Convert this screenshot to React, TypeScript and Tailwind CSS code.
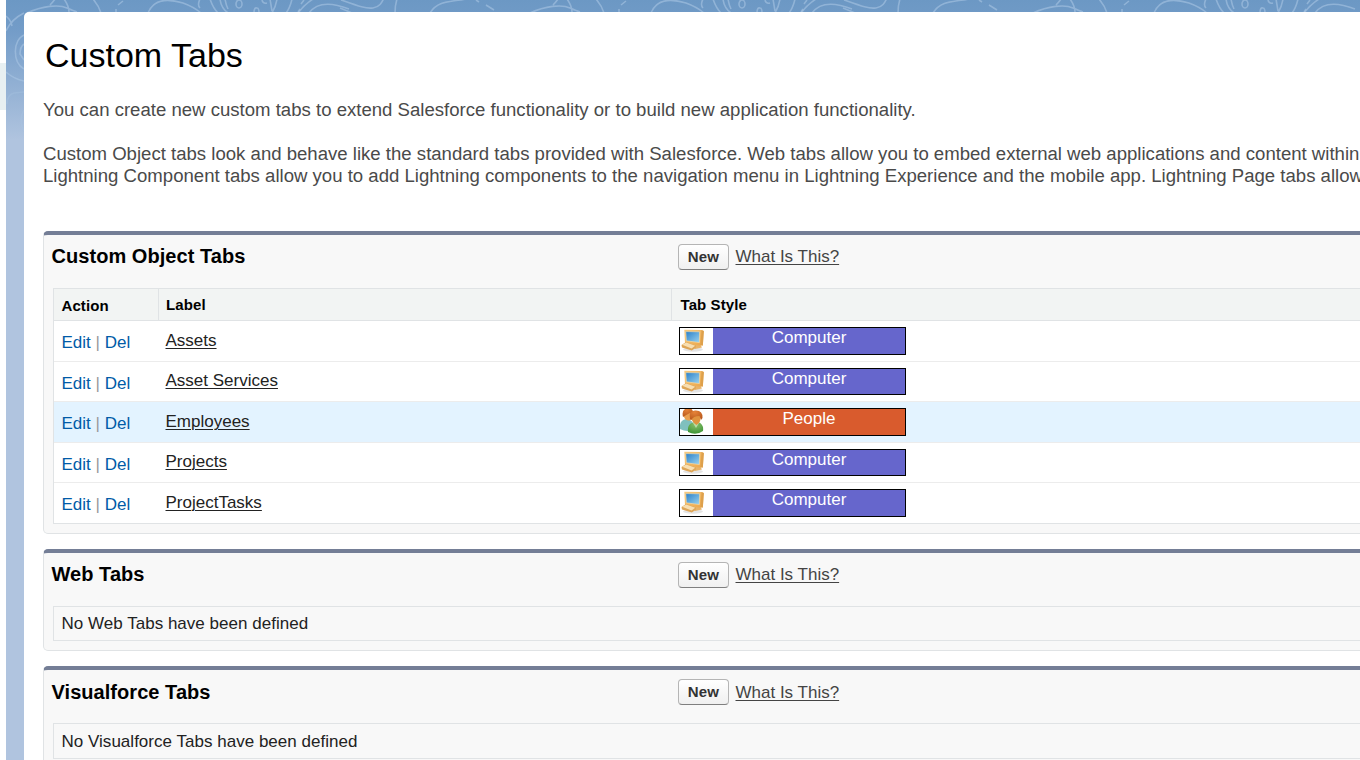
import React from "react";

type TabStyle = "Computer" | "People";

const rows: { label: string; style: TabStyle; height: string; badge: string; labelPad: string; highlight?: boolean }[] = [
  { label: "Assets", style: "Computer", height: "h-[41px]", badge: "h-[28px]", labelPad: "pt-[10px]" },
  { label: "Asset Services", style: "Computer", height: "h-[40px]", badge: "h-[27px]", labelPad: "pt-[9px]" },
  { label: "Employees", style: "People", height: "h-[41px]", badge: "h-[28px]", labelPad: "pt-[10px]", highlight: true },
  { label: "Projects", style: "Computer", height: "h-[40px]", badge: "h-[27px]", labelPad: "pt-[9px]" },
  { label: "ProjectTasks", style: "Computer", height: "h-[40px]", badge: "h-[28px]", labelPad: "pt-[10px]" },
];

function Doodles() {
  return (
    <svg className="absolute top-0 left-0" width="1360" height="140" fill="none" stroke="#a9c5e2" strokeOpacity="0.6" strokeWidth="1.6">
      <defs>
        <g id="strip">
          <path d="M0 8 Q5 10 12 13" />
          <path d="M1 0 C18 6 26 9 33 8 C40 7 42 2 44 -2" />
          <path d="M55 13 Q55 5 57 -1" />
          <path d="M90 13 C98 0 112 2 126 -1" />
          <path d="M146 5 L154 10 M136 0 L139 2" />
          <path d="M190 13 C205 6 222 4 230 8 Q237 11 240 12 M213 5 Q216 2 218 -1 M227 -1 Q232 6 232 12" />
          <path d="M256 -1 Q262 6 264 13 M279 13 L279 9 M281 5 L286 1" />
          <path d="M311 13 C317 -2 333 -1 346 3 Q357 7 364 13" />
          <path d="M363 -1 Q360 5 363 8 M373 -1 Q376 8 381 13 M383 -1 Q384 8 391 13 M388 -1 Q389 5 391 9" />
          <ellipse cx="402" cy="4" rx="3" ry="4" />
          <path d="M417 13 Q417 7 420 8 Q422 8 422 13 M425 0 Q426 4 430 3 M433 -1 L435 11 M440 -1 Q439 6 435 13" />
          <path d="M455 -1 Q453 8 449 13 M461 12 L463 9 M464 4 L467 0" />
          <path d="M461 13 Q468 4 476 -1 M472 13 C480 2 494 2 512 9" />
        </g>
      </defs>
      <use href="#strip" x="-163" />
      <use href="#strip" x="340" />
      <use href="#strip" x="843" />
      <path d="M6 16 Q11 20 12 26 M6 31 C10 22 16 17 24 13 M6 72 Q14 79 24 81" />
      <path d="M24 35 C13 40 12 62 24 69 M24 44 Q20 47 20 54 L24 60" />
      <path d="M7 104 Q7 95 14 93 L24 92 M24 110 Q18 120 24 131" strokeOpacity="0.35" />
    </svg>
  );
}

function ComputerIcon() {
  return (
    <svg width="28" height="26" viewBox="0 0 28 26">
      <defs>
        <linearGradient id="screen" x1="0" y1="0" x2="1" y2="1">
          <stop offset="0" stopColor="#2a7fc8" />
          <stop offset="1" stopColor="#9bd4f0" />
        </linearGradient>
        <linearGradient id="caseFill" x1="0" y1="0" x2="1" y2="1">
          <stop offset="0" stopColor="#f8cb80" />
          <stop offset="1" stopColor="#eba548" />
        </linearGradient>
      </defs>
      <ellipse cx="13" cy="21.5" rx="10" ry="2.2" fill="#c9c9c9" opacity="0.5" />
      <path d="M11 15 L20 16 L22 19.5 L15 21Z" fill="#e9b368" />
      <path d="M4.3 1.8 L21.5 2 L23.8 3 L22.8 17.4 L19 17.6 L5 15Z" fill="url(#caseFill)" />
      <path d="M21.5 2 L23.8 3 L22.8 17.4 L20.5 17Z" fill="#dda04c" />
      <path d="M5.8 3.6 L19.6 3.8 L19.4 14.6 L6.4 12.8Z" fill="url(#screen)" stroke="#f9dfac" strokeWidth="0.6" />
      <path d="M1.5 17 L6 14 L16 17.5 L15.5 20 L11.8 22.6 L2 19.5Z" fill="#dea557" />
      <path d="M2.2 16.8 L6.2 14.6 L15.2 17.8 L11.6 20.6Z" fill="#f8dfb2" />
    </svg>
  );
}

function PeopleIcon() {
  return (
    <svg width="28" height="26" viewBox="0 0 28 26">
      <defs>
        <radialGradient id="hair" cx="0.4" cy="0.2" r="0.8">
          <stop offset="0" stopColor="#e58338" />
          <stop offset="1" stopColor="#b9581c" />
        </radialGradient>
        <radialGradient id="green" cx="0.5" cy="0.2" r="0.8">
          <stop offset="0" stopColor="#8bc06b" />
          <stop offset="1" stopColor="#3f9638" />
        </radialGradient>
      </defs>
      <path d="M0 20 Q-1 11 6 10 Q14 10 14 20 Q8 24 0 20Z" fill="#7fc0be" />
      <path d="M4 3 Q6 -1 11 1 Q15 4 11 11 Q6 13 4 8Z" fill="#e9a050" />
      <path d="M3 8 Q1 0 8 -1 Q14 -1 13 6 L10 4 Q6 6 3 8Z" fill="url(#hair)" />
      <path d="M8 23 Q7 15 13 13.5 L18 13 Q24 15 23 22 Q16 27 8 23Z" fill="url(#green)" />
      <path d="M13 14 L16 19 L19 14Z" fill="#b9dca5" />
      <path d="M11 6 Q15 3 20 6 Q22 13 16.5 16 Q11 13 11 6Z" fill="#e0933f" />
      <path d="M10 10 Q8 2 15 1.5 Q23 1 22.5 9 L21 11 L19.5 7 Q13 7 11.5 11Z" fill="url(#hair)" />
    </svg>
  );
}

function StyleBadge({ style, height }: { style: TabStyle; height: string }) {
  return (
    <div className={`mt-[6px] flex w-[227px] border border-black bg-white text-white ${height}`}>
      <div className="w-[33px] shrink-0 overflow-hidden">{style === "Computer" ? <ComputerIcon /> : <PeopleIcon />}</div>
      <div className={`flex-1 text-center text-[17px] leading-[20px] ${style === "Computer" ? "bg-[#6666cc]" : "bg-[#d95b2d]"}`}>
        {style}
      </div>
    </div>
  );
}

function SectionHeader({ title, titlePad = "pt-[9px]", linkPad = "pt-[12px]" }: { title: string; titlePad?: string; linkPad?: string }) {
  return (
    <div className="flex h-[53px] items-start pl-[7.5px]">
      <h2 className={`w-[626.5px] text-[20px] leading-[24px] font-bold tracking-[0.05px] text-black ${titlePad}`}>{title}</h2>
      <button className="mt-[9px] h-[26px] w-[51px] rounded-[4px] border border-[#b5b5b5] border-b-[#7f7f7f] bg-gradient-to-b from-white to-[#f0f0f0] text-[15px] leading-[24px] font-bold tracking-[0.2px] text-[#333]">
        New
      </button>
      <div className={`ml-[6.5px] text-[17px] leading-[20px] text-[#444] ${linkPad}`}>
        <a className="underline decoration-1 underline-offset-2">What Is This?</a>
      </div>
    </div>
  );
}

function Section({ className, header, children }: { className: string; header: React.ReactNode; children: React.ReactNode }) {
  return (
    <section className={`w-[1400px] shrink-0 rounded-[5px] border border-t-4 border-[#e0e3e5] border-t-[#747e96] bg-[#f8f8f8] ${className}`}>
      {header}
      <div className="ml-[9px]">{children}</div>
    </section>
  );
}

function EmptyBox({ text, className }: { text: string; className: string }) {
  return <div className={`border border-[#e0e3e5] pl-[7.5px] text-[17px] tracking-[0.02px] text-[#222] ${className}`}>{text}</div>;
}

export default function App() {
  return (
    <div className="relative flex h-[760px] w-[1360px] overflow-hidden bg-white font-['Liberation_Sans',Arial,sans-serif]">
      <div className="h-full w-[6px] shrink-0 pt-[63px]">
        <div className="h-[47px] bg-[#e8f0f2]" />
      </div>
      <div className="relative h-full w-[1354px] bg-[#b0c4df] bg-[linear-gradient(#6c98c4_0px,#739cc8_30px,#b0c4df_140px)] pt-[12px] pl-[18px]">
        <div className="absolute inset-y-0 -left-[6px] w-[1360px] overflow-hidden [clip-path:inset(0_0_0_6px)]">
          <Doodles />
        </div>
        <main className="relative flex h-[748px] flex-col overflow-hidden rounded-tl-[5px] bg-white pl-[19px]">
          <h1 className="mt-[23px] ml-[2px] h-[40px] shrink-0 text-[34px] leading-[40px] text-black">Custom Tabs</h1>
          <div className="h-[156px] shrink-0 pt-[24px] text-[18.58px] leading-[22px] whitespace-nowrap text-[#4a4a4a]">
            <p>You can create new custom tabs to extend Salesforce functionality or to build new application functionality.</p>
            <p className="mt-[22px]">
              Custom Object tabs look and behave like the standard tabs provided with Salesforce. Web tabs allow you to embed external web applications and content within
            </p>
            <p>
              Lightning Component tabs allow you to add Lightning components to the navigation menu in Lightning Experience and the mobile app. Lightning Page tabs allow
            </p>
          </div>
          <Section className="h-[303px]" header={<SectionHeader title="Custom Object Tabs" />}>
            <div className="border border-[#e0e3e5] bg-white text-[17px]">
              <div className="flex h-[32px] border-b border-[#e0e3e5] bg-[#f2f4f3] text-[15px] leading-[31px] font-bold tracking-[0.1px] text-black">
                <div className="w-[105px] border-r border-[#e0e3e5] pt-[1px] pl-[7.5px]">Action</div>
                <div className="w-[513px] border-r border-[#e0e3e5] pl-[7px]">Label</div>
                <div className="pl-[8.5px]">Tab Style</div>
              </div>
              {rows.map((row, i) => (
                <div key={row.label} className={`flex ${row.height} ${i < 4 ? "border-b border-[#ececec]" : ""} ${row.highlight ? "bg-[#e3f3ff]" : ""}`}>
                  <div className="w-[104px] pt-[12px] pl-[7.5px] leading-[20px] text-[#015ba7]">
                    Edit <span className="text-[#999]">|</span> Del
                  </div>
                  <div className={`w-[521px] pl-[7.5px] leading-[20px] text-[#222] ${row.labelPad}`}>
                    <a className="underline decoration-1 underline-offset-2">{row.label}</a>
                  </div>
                  <StyleBadge style={row.style} height={row.badge} />
                </div>
              ))}
            </div>
          </Section>
          <Section className="mt-[15px] h-[102px]" header={<SectionHeader title="Web Tabs" />}>
            <EmptyBox text="No Web Tabs have been defined" className="h-[35px] leading-[33px]" />
          </Section>
          <Section className="mt-[15px] h-[103px]" header={<SectionHeader title="Visualforce Tabs" titlePad="pt-[10px]" linkPad="pt-[13px]" />}>
            <EmptyBox text="No Visualforce Tabs have been defined" className="h-[36px] leading-[35px]" />
          </Section>
        </main>
      </div>
    </div>
  );
}
